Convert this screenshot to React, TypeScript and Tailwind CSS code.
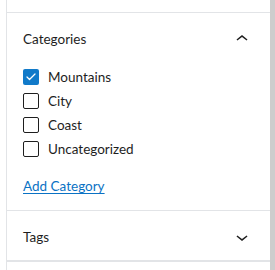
import { Check } from 'lucide-react';

const cats = [
  { name: 'Mountains', checked: true },
  { name: 'City', checked: false },
  { name: 'Coast', checked: false },
  { name: 'Uncategorized', checked: false },
];

function ChevronUp() {
  return (
    <svg width="24" height="24" viewBox="0 0 24 24" fill="#1e1e1e">
      <path d="M6.5 12.4L12 8l5.5 4.4-.9 1.2L12 10l-4.6 3.6-.9-1.2z" />
    </svg>
  );
}

function ChevronDown() {
  return (
    <svg width="24" height="24" viewBox="0 0 24 24" fill="#1e1e1e">
      <path d="M17.5 11.6L12 16l-5.5-4.4.9-1.2L12 14l4.6-3.6.9 1.2z" />
    </svg>
  );
}

export default function App() {
  return (
    <div className="flex w-[275px] h-[270px] bg-white overflow-hidden text-[13px] text-[#1e1e1e]" style={{ fontFamily: 'Lato, "Noto Sans", sans-serif' }}>
      <div className="w-[6px] shrink-0" />
      <div className="flex-1 border-l border-[#e2e4e7] flex flex-col">
        {/* previous panel (cut off) */}
        <div className="h-[13px] border-b border-[#e2e4e7]" />

        {/* Categories */}
        <div className="px-4 pt-4 pb-[14px] border-b border-[#e2e4e7]">
          <div className="flex items-center justify-between h-5">
            <span className="leading-5 text-[13.5px]">Categories</span>
            <ChevronUp />
          </div>
          <div className="mt-5 flex flex-col gap-2">
            {cats.map((c) => (
              <label key={c.name} className="flex items-center gap-[9px] h-4">
                <span
                  className={
                    c.checked
                      ? 'w-4 h-4 rounded-[2px] bg-[#117ac9] flex items-center justify-center'
                      : 'w-4 h-4 rounded-[2px] border border-[#1e1e1e] bg-white'
                  }
                >
                  {c.checked && <Check className="w-3 h-3 text-white" strokeWidth={2.5} />}
                </span>
                <span className="leading-4 text-[13.5px]">{c.name}</span>
              </label>
            ))}
          </div>
          <a href="#" className="block mt-[19px] leading-5 text-[13.5px] text-[#0a72c4] underline underline-offset-2">
            Add Category
          </a>
        </div>

        {/* Tags */}
        <div className="px-4 pt-4 pb-[13px] border-b-2 border-[#e2e4e7]">
          <div className="flex items-center justify-between h-5">
            <span className="leading-5 text-[13.5px]">Tags</span>
            <ChevronDown />
          </div>
        </div>
        <div className="flex-1" />
      </div>
      <div className="w-[5px] shrink-0 bg-[#cdcdcd]" />
    </div>
  );
}
